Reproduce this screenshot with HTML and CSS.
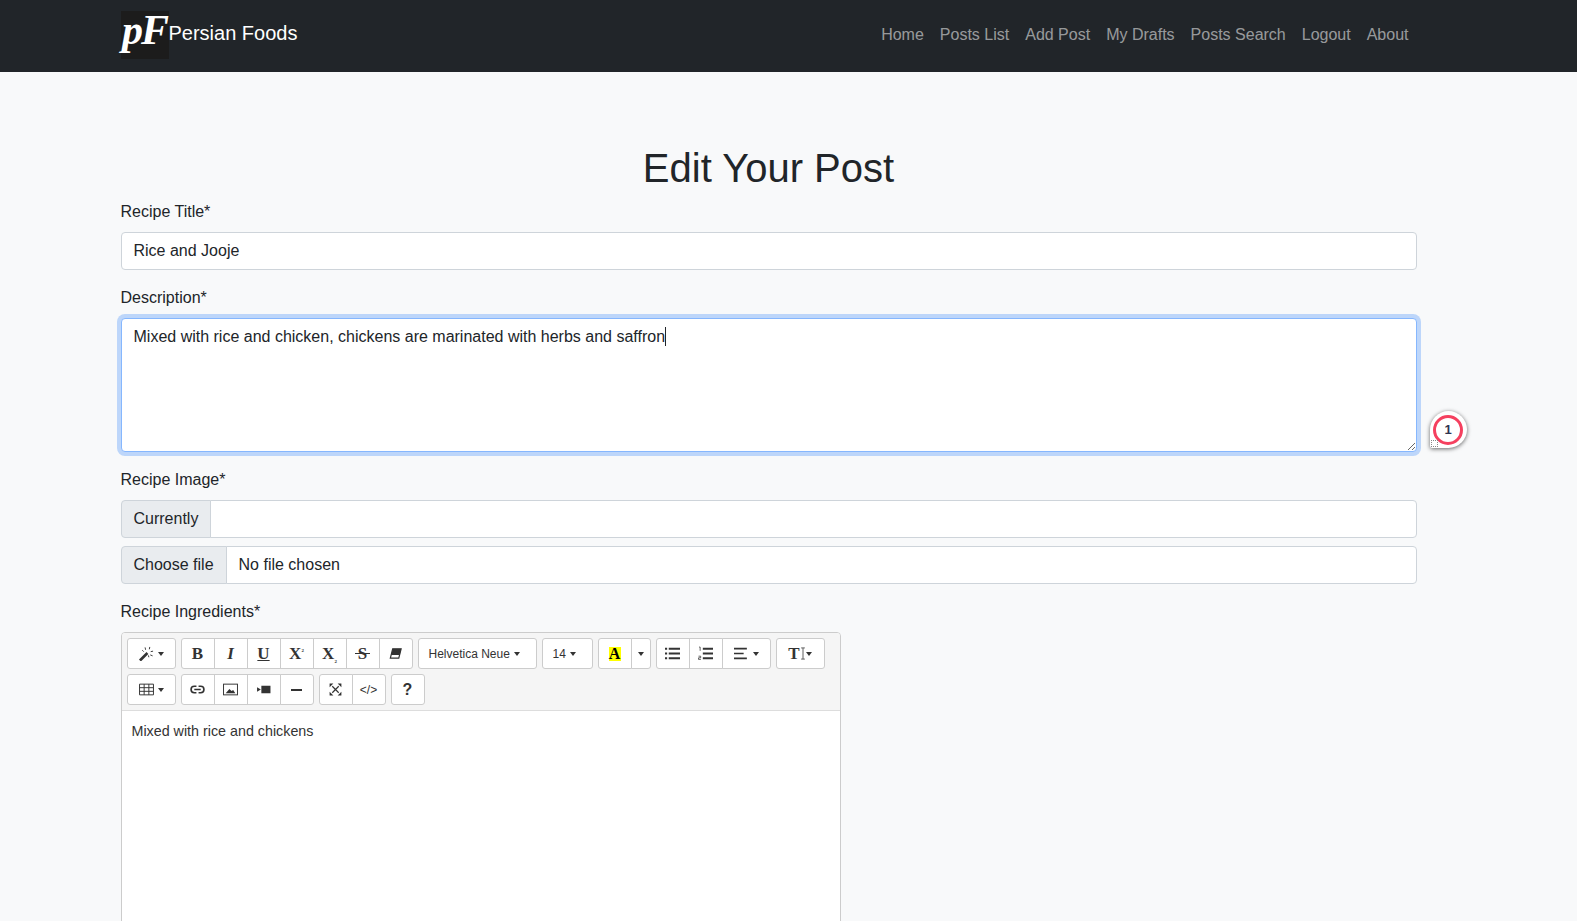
FILE: index.html
```html
<!DOCTYPE html>
<html lang="en">
<head>
  <meta charset="UTF-8">
  <meta name="viewport" content="width=device-width, initial-scale=1.0">
  <title>Edit Your Post</title>
  <link rel="stylesheet" href="styles.css">
</head>
<body>

  <nav class="navbar">
    <div class="navbar-inner">
      <a class="brand" href="#">
        <span class="brand-logo">pF</span>
        <span class="brand-name">Persian Foods</span>
      </a>
      <div class="nav-links">
        <a href="#">Home</a>
        <a href="#">Posts List</a>
        <a href="#">Add Post</a>
        <a href="#">My Drafts</a>
        <a href="#">Posts Search</a>
        <a href="#">Logout</a>
        <a href="#">About</a>
      </div>
    </div>
  </nav>

  <div class="container">
    <h1>Edit Your Post</h1>
    <form>
      <label for="title">Recipe Title*</label>
      <input class="form-control title-input" type="text" id="title" value="Rice and Jooje">

      <label for="description">Description*</label>
      <div class="textarea-wrap">
        <textarea class="form-control description" id="description">Mixed with rice and chicken, chickens are marinated with herbs and saffron</textarea>
        <span class="caret-line"></span>
        <!-- Floating helper badge beside the textarea -->
        <div class="helper-badge">
          <span class="helper-ring">1</span>
          <span class="helper-dots"></span>
        </div>
      </div>

      <label>Recipe Image*</label>
      <div class="input-group">
        <span class="input-group-text">Currently</span>
        <input class="form-control group-input" type="text">
      </div>
      <div class="input-group file-group">
        <span class="input-group-text file-button">Choose file</span>
        <span class="form-control group-input">No file chosen</span>
      </div>

      <label>Recipe Ingredients*</label>
      <div class="editor">
        <div class="toolbar">
          <div class="btn-group">
            <button type="button" class="tool w-wide">
              <svg class="icon" viewBox="0 0 16 16"><path d="M0 14.500 8 6.500l2 2-8 8z" fill="#333"/><path d="M6.500 1.500l.5 2.500M11.500 1 11 3.500M15 5.500l-2.500.5M14.500 10.500l-2.500-1M10.500 12l-.5-2M3.500 4.500 5 6" stroke="#333" fill="none"/></svg>
              <i class="arrow"></i>
            </button>
          </div>
          <div class="btn-group">
            <button type="button" class="tool"><span class="serif-bold">B</span></button>
            <button type="button" class="tool"><span class="serif-bold slant">I</span></button>
            <button type="button" class="tool"><span class="serif-bold under">U</span></button>
            <button type="button" class="tool"><span class="serif-bold">X<sup>2</sup></span></button>
            <button type="button" class="tool"><span class="serif-bold">X<sub>2</sub></span></button>
            <button type="button" class="tool"><span class="serif-bold strike">S</span></button>
            <button type="button" class="tool">
              <svg class="icon" viewBox="0 0 16 16"><path d="M5 3h9l-2.500 10H2.500z" fill="none" stroke="#333" stroke-width="1.300"/><path d="M5 3h9l-1.500 6.500H3.500z" fill="#333"/></svg>
            </button>
          </div>
          <div class="btn-group">
            <button type="button" class="tool w-font">Helvetica Neue <i class="arrow"></i></button>
          </div>
          <div class="btn-group">
            <button type="button" class="tool w-size">14 <i class="arrow"></i></button>
          </div>
          <div class="btn-group">
            <button type="button" class="tool"><span class="serif-bold color-a">A</span></button>
            <button type="button" class="tool w-caret"><i class="arrow"></i></button>
          </div>
          <div class="btn-group">
            <button type="button" class="tool">
              <svg class="icon" viewBox="0 0 14 14"><path d="M3.500 2.500H14M3.500 7H14M3.500 11.500H14" stroke="#333" stroke-width="1.800"/><path d="M0 2.500h2M0 7h2M0 11.500h2" stroke="#333" stroke-width="1.800"/></svg>
            </button>
            <button type="button" class="tool">
              <svg class="icon" viewBox="0 0 14 14"><path d="M4.500 2.500H14M4.500 7H14M4.500 11.500H14" stroke="#333" stroke-width="1.800"/><path d="M1 1h1v3.500M.5 9.500h2v1.500h-2v1.500h2.200" stroke="#333" stroke-width=".7" fill="none"/></svg>
            </button>
            <button type="button" class="tool w-align">
              <svg class="icon" viewBox="0 0 14 14"><path d="M0 2.500h12M0 7h9M0 11.500h12" stroke="#333" stroke-width="1.600"/></svg>
              <i class="arrow"></i>
            </button>
          </div>
          <div class="btn-group">
            <button type="button" class="tool w-height">
              <span class="serif-bold big-t">T</span>
              <svg class="beam" viewBox="0 0 4 14"><path d="M0 1h4M0 13h4M2 1v12" stroke="#555" stroke-width="1" fill="none"/></svg>
              <i class="arrow"></i>
            </button>
          </div>

          <div class="toolbar-break"></div>

          <div class="btn-group">
            <button type="button" class="tool w-wide">
              <svg class="icon" viewBox="0 0 14 14"><path d="M.5 2h13v10H.5zM.5 5.300h13M.5 8.700h13M4.800 2v10M9.200 2v10" stroke="#333" stroke-width=".9" fill="none"/></svg>
              <i class="arrow"></i>
            </button>
          </div>
          <div class="btn-group">
            <button type="button" class="tool">
              <svg class="icon" viewBox="0 0 14 14"><path d="M6 4H4a3 3 0 0 0 0 6h2M8 4h2a3 3 0 0 1 0 6H8M4 7h6" stroke="#333" stroke-width="1.500" fill="none"/></svg>
            </button>
            <button type="button" class="tool">
              <svg class="icon" viewBox="0 0 14 14"><rect x=".5" y="2" width="13" height="10" fill="none" stroke="#333" stroke-width=".9"/><path d="M2.500 10.500 6 6.500l2 2 1.500-1 2 3z" fill="#333"/></svg>
            </button>
            <button type="button" class="tool">
              <svg class="icon" viewBox="0 0 14 14"><rect x="5" y="3.500" width="8.500" height="7" fill="#333"/><path d="M4.500 7 1 5v4z" fill="#333"/></svg>
            </button>
            <button type="button" class="tool"><span class="rule-bar"></span></button>
          </div>
          <div class="btn-group">
            <button type="button" class="tool">
              <svg class="icon" viewBox="0 0 14 14"><path d="M4 4l6 6M10 4l-6 6" stroke="#333" stroke-width="1.100"/><path d="M1.500 1.500h3.500l-3.500 3.500zM12.500 1.500H9l3.500 3.500zM1.500 12.500H5L1.500 9zM12.500 12.500H9L12.500 9z" fill="#333"/></svg>
            </button>
            <button type="button" class="tool code-tool">&lt;/&gt;</button>
          </div>
          <div class="btn-group">
            <button type="button" class="tool help-tool">?</button>
          </div>
        </div>
        <div class="editor-body">Mixed with rice and chickens</div>
      </div>
    </form>
  </div>

</body>
</html>
```

FILE: styles.css
```css
* {
  box-sizing: border-box;
}
html, body {
  height: 921px;
  overflow: hidden;
}
body {
  margin: 0;
  font-family: "Liberation Sans", Arial, sans-serif;
  font-size: 16px;
  line-height: 1.5;
  color: #212529;
  background-color: #f8f9fa;
}

/* navbar */
.navbar {
  height: 72px;
  background-color: #212529;
}
.navbar-inner {
  width: 1296px;
  height: 100%;
  margin-left: 120.5px;
  display: flex;
  align-items: center;
  justify-content: space-between;
}
.brand {
  display: flex;
  align-items: center;
  color: #fff;
  text-decoration: none;
  font-size: 20px;
  margin-top: -2px;
}
.brand-logo {
  width: 48px;
  height: 48px;
  background-color: #1c1c1c;
  color: #fff;
  font-family: "Liberation Serif", serif;
  font-weight: bold;
  font-style: italic;
  font-size: 42px;
  line-height: 38px;
  letter-spacing: -2px;
  text-align: center;
  white-space: nowrap;
}
.brand-name {
  margin-bottom: 4px;
}
.nav-links {
  display: flex;
  margin-top: -2px;
}
.nav-links a {
  padding: 8px;
  color: rgba(255, 255, 255, 0.55);
  text-decoration: none;
}

/* page */
.container {
  width: 1296px;
  margin-left: 120.5px;
}
h1 {
  margin: 68px 0 4px;
  font-size: 40px;
  font-weight: 500;
  line-height: 56px;
  text-align: center;
}
label {
  display: block;
  margin-bottom: 8px;
}
.form-control {
  display: block;
  width: 100%;
  height: 38px;
  padding: 6px 12px;
  font-family: inherit;
  font-size: 16px;
  line-height: 1.5;
  color: #212529;
  background-color: #fff;
  border: 1px solid #ced4da;
  border-radius: 4px;
  outline: none;
}
.title-input {
  margin-bottom: 16px;
}
.textarea-wrap {
  position: relative;
  margin-bottom: 16px;
}
.description {
  height: 134px;
  resize: vertical;
  border-color: #86b7fe;
  box-shadow: 0 0 0 4px rgba(13, 110, 253, 0.25);
}
.caret-line {
  position: absolute;
  left: 544px;
  top: 9px;
  width: 1px;
  height: 19px;
  background-color: #212529;
}
.helper-badge {
  position: absolute;
  left: 1309px;
  top: 93px;
  width: 37px;
  height: 37px;
  background-color: #fff;
  border-radius: 50% 50% 50% 2px;
  box-shadow: 0 1px 4px rgba(0, 0, 0, 0.6);
  display: flex;
  align-items: center;
  justify-content: center;
}
.helper-ring {
  width: 30px;
  height: 30px;
  border: 3px solid #f5405f;
  border-radius: 50%;
  font-size: 13px;
  font-weight: bold;
  line-height: 24px;
  text-align: center;
  color: #2f3450;
}
.helper-dots {
  position: absolute;
  left: 1px;
  bottom: 1px;
  width: 7px;
  height: 7px;
  border: 1px dotted #888;
}
.input-group {
  display: flex;
  margin-bottom: 8px;
}
.input-group-text {
  height: 38px;
  padding: 6px 12px;
  background-color: #e9ecef;
  border: 1px solid #ced4da;
  border-radius: 4px 0 0 4px;
}
.group-input {
  flex: 1;
  margin-left: -1px;
  border-radius: 0 4px 4px 0;
}
.file-group {
  margin-bottom: 16px;
}

/* rich text editor */
.editor {
  width: 720px;
  height: 500px;
  background-color: #fff;
  border: 1px solid #ccc;
  border-radius: 4px;
}
.toolbar {
  display: flex;
  flex-wrap: wrap;
  padding: 0 0 5px 5px;
  background-color: #f5f5f5;
  border-bottom: 1px solid #ddd;
  border-radius: 3px 3px 0 0;
}
.toolbar-break {
  flex-basis: 100%;
  height: 0;
}
.btn-group {
  display: flex;
  margin: 5px 5px 0 0;
  height: 31px;
}
.tool {
  display: flex;
  align-items: center;
  justify-content: center;
  gap: 4px;
  width: 34px;
  height: 31px;
  margin-left: -1px;
  padding: 0;
  font-family: "Liberation Sans", Arial, sans-serif;
  font-size: 12px;
  color: #333;
  background-color: #fff;
  border: 1px solid #ccc;
}
.btn-group .tool:first-child {
  margin-left: 0;
  border-radius: 3px 0 0 3px;
}
.btn-group .tool:last-child {
  border-radius: 0 3px 3px 0;
}
.btn-group .tool:only-child {
  border-radius: 3px;
}
.btn-group .w-wide {
  width: 49px;
}
.btn-group .w-font {
  width: 119px;
  justify-content: flex-start;
  padding-left: 10px;
}
.btn-group .w-size {
  width: 51px;
  justify-content: flex-start;
  padding-left: 10px;
}
.w-caret {
  width: 20px;
}
.w-align {
  width: 49px;
}
.btn-group .w-height {
  width: 49px;
  gap: 1px;
}
.icon {
  width: 15px;
  height: 15px;
}
.beam {
  width: 4px;
  height: 13px;
}
.arrow {
  display: inline-block;
  width: 0;
  height: 0;
  border-top: 4px solid #333;
  border-left: 3px solid transparent;
  border-right: 3px solid transparent;
}
.serif-bold {
  font-family: "Liberation Serif", serif;
  font-weight: bold;
  font-size: 17px;
  line-height: 1;
}
.serif-bold sup, .serif-bold sub {
  font-size: 5px;
  line-height: 0;
}
.slant {
  font-style: italic;
}
.under {
  text-decoration: underline;
}
.strike {
  position: relative;
  font-weight: bold;
}
.strike::after {
  content: "";
  position: absolute;
  left: -3px;
  right: -3px;
  top: 8px;
  height: 1px;
  background-color: #333;
}
.color-a {
  background-color: #ff0;
  color: #000;
  font-size: 16px;
  line-height: 14px;
  width: 12px;
  text-align: center;
}
.big-t {
  font-size: 17px;
}
.rule-bar {
  width: 11px;
  height: 2px;
  background-color: #333;
}
.code-tool {
  font-size: 12px;
}
.help-tool {
  font-size: 16px;
  font-weight: bold;
}
.editor-body {
  padding: 10px;
  font-size: 14.3px;
  line-height: 20px;
  color: #333;
}
```
